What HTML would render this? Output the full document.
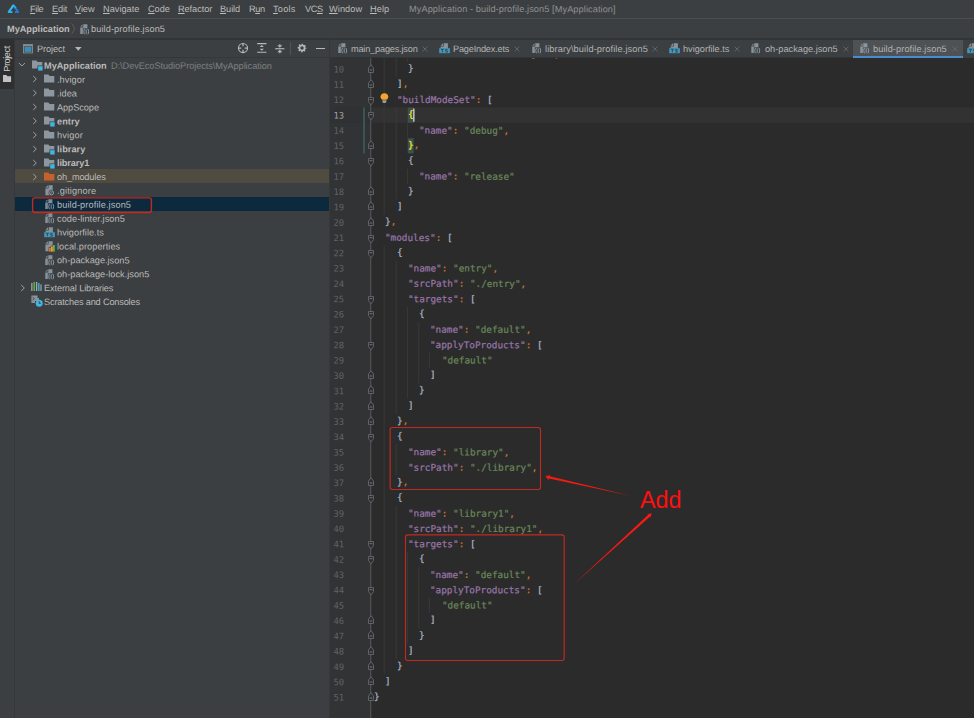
<!DOCTYPE html>
<html lang="en">
<head>
<meta charset="utf-8">
<title>MyApplication - build-profile.json5</title>
<style>
html,body{margin:0;padding:0}
body{width:974px;height:718px;overflow:hidden;background:#3c3f41;position:relative;font-family:'Liberation Sans', sans-serif}
.t,.cl,.ln{transform-origin:0 0}
.t{position:absolute;white-space:pre;line-height:12px;font-family:'Liberation Sans', sans-serif}
.t u{text-decoration-thickness:.8px;text-underline-offset:1.2px}
.i{position:absolute;overflow:visible}
#menubar{position:absolute;left:0;top:0;width:974px;height:18px;background:#3c3f41}
#menuline{position:absolute;left:0;top:18px;width:974px;height:1px;background:#4b4e50}
#navline{position:absolute;left:0;top:38px;width:974px;height:1.6px;background:#323537}
#strip{position:absolute;left:0;top:39.6px;width:14px;height:679px;background:#3c3f41}
#striptab{position:absolute;left:0;top:39px;width:13.8px;height:50.4px;background:#2d2f30}
#stripline{position:absolute;left:13.6px;top:39.6px;width:1px;height:679px;background:#353839}
#striptext{position:absolute;left:-10.7px;top:53.2px;width:36px;height:12px;line-height:12px;font-size:9.2px;letter-spacing:-.42px;color:#d0d0d0;transform:rotate(-90deg);text-align:center;white-space:pre}
#phead{position:absolute;left:14.6px;top:56.8px;width:314.4px;height:1px;background:#353839}
.row{position:absolute;left:14.6px;width:314.4px;height:13.895px}
#edborder{position:absolute;left:329px;top:39px;width:1px;height:679px;background:#36383a}
#gutter{position:absolute;left:330px;top:58px;width:41px;height:660px;background:#313335}
#editor{position:absolute;left:371px;top:58px;width:603px;height:660px;background:#2b2b2b}
.g{position:absolute;width:1px;background:#393939}
.cl{position:absolute;white-space:pre;-webkit-text-stroke:.22px;font-family:'DejaVu Sans Mono', 'Liberation Mono', monospace;font-size:9.35px;line-height:15.32px;height:15.32px;color:#a9b7c6}
.ln{position:absolute;left:331px;width:12.9px;text-align:right;font-family:'DejaVu Sans Mono', 'Liberation Mono', monospace;font-size:8.9px;letter-spacing:-.15px;line-height:15.32px;height:15.32px}
.k{color:#9876aa}.s{color:#6a8759}.p{color:#a9b7c6}.o{color:#cc7832}
.h{color:#ffef28}
#tabbar{position:absolute;left:330px;top:39.6px;width:643px;height:18.4px;background:#3c3f41}
#tabactive{position:absolute;left:853px;top:39.6px;width:110px;height:18px;background:#4e5254}
#tabul{position:absolute;left:853px;top:55.8px;width:110px;height:2.4px;background:#4a8cd0}
#tabline{position:absolute;left:330px;top:57.4px;width:523px;height:1px;background:#323537}
#annot{position:absolute;left:0;top:0}
#codewrap{position:absolute;left:0;top:0;width:974px;height:718px;clip-path:inset(58px 0 0 331px)}
#txt{position:absolute;left:0;top:0;width:974px;height:718px;}
</style>
</head>
<body>
<div id="menubar"></div><div id="menuline"></div><div id="navline"></div>
<svg class="i" style="left:6.8px;top:3.2px" width="13" height="11" viewBox="0 0 13 11"><path d="M8 9H11.2L7 2.9Q6.5 2.2 6 2.9" fill="none" stroke="#2277d8" stroke-width="2" stroke-linejoin="round"/><path d="M8.8 5.1L7 2.9Q6.5 2.2 6 2.9L5.2 3.5" fill="none" stroke="#27a6e2" stroke-width="2" stroke-linejoin="round"/><path d="M5.2 9H1.8L6 2.9Q6.3 2.5 6.6 2.5" fill="none" stroke="#2cc6ec" stroke-width="2" stroke-linejoin="round"/><path d="M5.2 9H1.8L3.5 6.3" fill="none" stroke="#29b0e6" stroke-width="2" stroke-linejoin="round"/></svg>
<svg class="i" style="left:70.6px;top:22.8px" width="5" height="12" viewBox="0 0 5 12"><path d="M0.7 0.4L3.9 5.6L0.7 10.8" stroke="#5f6264" stroke-width=".85" fill="none"/></svg>
<svg class="i" style="left:79.5px;top:23.6px" width="10" height="11" viewBox="0 0 10 11"><path d="M0.3 2.6L2.5 0.4V2.6Z" fill="#9aa7b0" opacity=".8"/><path d="M3.3 0.2H7.4V10H0.3V3.4H3.3Z" fill="#9aa7b0" opacity=".8"/><rect x="2.8" y="4.3" width="7.2" height="6.7" fill="#3c3f41"/><path d="M4.6 4.9C3.5 6.3 3.5 8.9 4.6 10.3M7.8 4.9C8.9 6.3 8.9 8.9 7.8 10.3" stroke="#9aa7b0" stroke-width="1" fill="none" opacity=".88"/><path d="M6.2 5.4V9.8" stroke="#9aa7b0" stroke-width="1" opacity=".88"/></svg>
<div id="strip"></div><div id="striptab"></div><div id="stripline"></div>
<div id="striptext">Project</div>
<svg class="i" style="left:2.9px;top:75px" width="9" height="8" viewBox="0 0 9 8"><path d="M0 0H3.4L4.4 1.2H8.1V6.9H0Z" fill="#c0c2c3"/></svg>
<div id="phead"></div>
<svg class="i" style="left:22.9px;top:44px" width="10" height="9.4" viewBox="0 0 10 9.4"><rect x="0.45" y="0.45" width="9.1" height="8.5" fill="none" stroke="#878d93" stroke-width=".9"/><rect x="0.9" y="0.9" width="8.2" height="1.5" fill="#878d93"/><rect x="1.5" y="3" width="7" height="4.9" fill="#3a8db4"/></svg>
<svg class="i" style="left:75px;top:47.3px" width="7" height="4" viewBox="0 0 7 4"><path d="M0 0H6.6L3.3 3.8Z" fill="#b4b6b8"/></svg>
<svg class="i" style="left:237.2px;top:42.3px" width="12" height="12" viewBox="0 0 12 12"><circle cx="6" cy="6" r="4.55" fill="none" stroke="#b6b8ba" stroke-width="1.15"/><path d="M6 1.4V4.3M6 7.7V10.6M1.4 6H4.3M7.7 6H10.6" stroke="#b6b8ba" stroke-width="1.25"/></svg>
<svg class="i" style="left:256.8px;top:43.4px" width="10" height="10" viewBox="0 0 10 10"><path d="M0.2 0.6H9.4M0.2 9.2H9.4" stroke="#b6b8ba" stroke-width="1.15"/><path d="M4.8 2L6.9 4.1H2.7ZM4.8 7.8L6.9 5.7H2.7Z" fill="#b6b8ba"/></svg>
<svg class="i" style="left:274.6px;top:42.6px" width="10" height="12" viewBox="0 0 10 12"><path d="M0.2 5.75H9.4" stroke="#b6b8ba" stroke-width="1.15"/><path d="M4.8 4.7L7.3 2.2H2.3ZM4.8 6.8L7.3 9.3H2.3Z" fill="#b6b8ba"/><path d="M4.8 1.2V2.4M4.8 9.1V10.3" stroke="#b6b8ba" stroke-width="1.1"/></svg>
<div style="position:absolute;left:290.3px;top:42px;width:1px;height:13px;background:#515456"></div>
<svg class="i" style="left:297.3px;top:43.4px" width="10" height="10" viewBox="0 0 10 10"><circle cx="5" cy="5" r="2.55" fill="none" stroke="#b6b8ba" stroke-width="1.6"/><circle cx="5" cy="5" r="3.6" fill="none" stroke="#b6b8ba" stroke-width="1.5" stroke-dasharray="1.6 1.227" stroke-dashoffset=".8"/></svg>
<div style="position:absolute;left:315.8px;top:47.5px;width:9px;height:1.3px;background:#b6b8ba"></div>
<svg class="i" style="left:18.3px;top:62.0px" width="8" height="6" viewBox="0 0 8 6"><path d="M0.9 1L3.9 4L6.9 1" stroke="#a4a6a8" stroke-width=".95" fill="none"/></svg>
<svg class="i" style="left:31.6px;top:60.2px" width="11" height="10" viewBox="0 0 11 10"><path d="M0 0.6H4.4L5.6 2H10.3V8.6H0Z" fill="#9aa7b0" opacity="0.85"/><rect x="5.5" y="5.5" width="5.2" height="5.2" fill="#3c3f41"/><rect x="6.2" y="6.2" width="4.4" height="4.4" fill="#40b6e0"/></svg>
<svg class="i" style="left:31.8px;top:75.3px" width="6" height="8" viewBox="0 0 6 8"><path d="M1.2 1L4.3 4L1.2 7" stroke="#a4a6a8" stroke-width=".95" fill="none"/></svg>
<svg class="i" style="left:43.9px;top:74.1px" width="11" height="10" viewBox="0 0 11 10"><path d="M0 0.6H4.4L5.6 2H10.3V8.6H0Z" fill="#9aa7b0" opacity="0.85"/></svg>
<svg class="i" style="left:31.8px;top:89.2px" width="6" height="8" viewBox="0 0 6 8"><path d="M1.2 1L4.3 4L1.2 7" stroke="#a4a6a8" stroke-width=".95" fill="none"/></svg>
<svg class="i" style="left:43.9px;top:88.0px" width="11" height="10" viewBox="0 0 11 10"><path d="M0 0.6H4.4L5.6 2H10.3V8.6H0Z" fill="#9aa7b0" opacity="0.85"/></svg>
<svg class="i" style="left:31.8px;top:103.1px" width="6" height="8" viewBox="0 0 6 8"><path d="M1.2 1L4.3 4L1.2 7" stroke="#a4a6a8" stroke-width=".95" fill="none"/></svg>
<svg class="i" style="left:43.9px;top:101.9px" width="11" height="10" viewBox="0 0 11 10"><path d="M0 0.6H4.4L5.6 2H10.3V8.6H0Z" fill="#9aa7b0" opacity="0.85"/></svg>
<svg class="i" style="left:31.8px;top:117.0px" width="6" height="8" viewBox="0 0 6 8"><path d="M1.2 1L4.3 4L1.2 7" stroke="#a4a6a8" stroke-width=".95" fill="none"/></svg>
<svg class="i" style="left:43.9px;top:115.8px" width="11" height="10" viewBox="0 0 11 10"><path d="M0 0.6H4.4L5.6 2H10.3V8.6H0Z" fill="#9aa7b0" opacity="0.85"/><rect x="5.5" y="5.5" width="5.2" height="5.2" fill="#3c3f41"/><rect x="6.2" y="6.2" width="4.4" height="4.4" fill="#40b6e0"/></svg>
<svg class="i" style="left:31.8px;top:130.9px" width="6" height="8" viewBox="0 0 6 8"><path d="M1.2 1L4.3 4L1.2 7" stroke="#a4a6a8" stroke-width=".95" fill="none"/></svg>
<svg class="i" style="left:43.9px;top:129.7px" width="11" height="10" viewBox="0 0 11 10"><path d="M0 0.6H4.4L5.6 2H10.3V8.6H0Z" fill="#9aa7b0" opacity="0.85"/></svg>
<svg class="i" style="left:31.8px;top:144.8px" width="6" height="8" viewBox="0 0 6 8"><path d="M1.2 1L4.3 4L1.2 7" stroke="#a4a6a8" stroke-width=".95" fill="none"/></svg>
<svg class="i" style="left:43.9px;top:143.6px" width="11" height="10" viewBox="0 0 11 10"><path d="M0 0.6H4.4L5.6 2H10.3V8.6H0Z" fill="#9aa7b0" opacity="0.85"/><rect x="5.5" y="5.5" width="5.2" height="5.2" fill="#3c3f41"/><rect x="6.2" y="6.2" width="4.4" height="4.4" fill="#40b6e0"/></svg>
<svg class="i" style="left:31.8px;top:158.7px" width="6" height="8" viewBox="0 0 6 8"><path d="M1.2 1L4.3 4L1.2 7" stroke="#a4a6a8" stroke-width=".95" fill="none"/></svg>
<svg class="i" style="left:43.9px;top:157.5px" width="11" height="10" viewBox="0 0 11 10"><path d="M0 0.6H4.4L5.6 2H10.3V8.6H0Z" fill="#9aa7b0" opacity="0.85"/><rect x="5.5" y="5.5" width="5.2" height="5.2" fill="#3c3f41"/><rect x="6.2" y="6.2" width="4.4" height="4.4" fill="#40b6e0"/></svg>
<div class="row" style="top:168.86px;background:#4f4b40"></div>
<svg class="i" style="left:31.8px;top:172.6px" width="6" height="8" viewBox="0 0 6 8"><path d="M1.2 1L4.3 4L1.2 7" stroke="#a4a6a8" stroke-width=".95" fill="none"/></svg>
<svg class="i" style="left:43.9px;top:171.5px" width="11" height="10" viewBox="0 0 11 10"><path d="M0 0.6H4.4L5.6 2H10.3V8.6H0Z" fill="#c4622d" opacity="1"/></svg>
<svg class="i" style="left:45.0px;top:185.2px" width="10" height="11" viewBox="0 0 10 11"><path d="M0.4 2.7L2.8 0.3V2.7Z" fill="#9aa7b0" opacity=".85"/><path d="M3.5 0.3H7.7V10.2H0.4V3.4H3.5Z" fill="#9aa7b0" opacity=".8"/><circle cx="6.6" cy="7.8" r="3" fill="#3c3f41"/><circle cx="6.6" cy="7.8" r="2" fill="none" stroke="#9aa7b0" stroke-width=".85"/><path d="M5.3 9.1L7.9 6.5" stroke="#9aa7b0" stroke-width=".7"/></svg>
<div class="row" style="top:197px;height:14px;background:#0d293e"></div>
<svg class="i" style="left:45.0px;top:199.1px" width="10" height="11" viewBox="0 0 10 11"><path d="M0.3 2.6L2.5 0.4V2.6Z" fill="#9aa7b0" opacity=".8"/><path d="M3.3 0.2H7.4V10H0.3V3.4H3.3Z" fill="#9aa7b0" opacity=".8"/><rect x="2.8" y="4.3" width="7.2" height="6.7" fill="#0d293e"/><path d="M4.6 4.9C3.5 6.3 3.5 8.9 4.6 10.3M7.8 4.9C8.9 6.3 8.9 8.9 7.8 10.3" stroke="#9aa7b0" stroke-width="1" fill="none" opacity=".88"/><path d="M6.2 5.4V9.8" stroke="#9aa7b0" stroke-width="1" opacity=".88"/></svg>
<svg class="i" style="left:45.0px;top:213.0px" width="10" height="11" viewBox="0 0 10 11"><path d="M0.3 2.6L2.5 0.4V2.6Z" fill="#9aa7b0" opacity=".8"/><path d="M3.3 0.2H7.4V10H0.3V3.4H3.3Z" fill="#9aa7b0" opacity=".8"/><rect x="2.8" y="4.3" width="7.2" height="6.7" fill="#3c3f41"/><path d="M4.6 4.9C3.5 6.3 3.5 8.9 4.6 10.3M7.8 4.9C8.9 6.3 8.9 8.9 7.8 10.3" stroke="#9aa7b0" stroke-width="1" fill="none" opacity=".88"/><path d="M6.2 5.4V9.8" stroke="#9aa7b0" stroke-width="1" opacity=".88"/></svg>
<svg class="i" style="left:43.9px;top:226.9px" width="12" height="11" viewBox="0 0 12 11"><path d="M1.6 2.7L4 0.3V2.7Z" fill="#9aa7b0" opacity=".85"/><path d="M4.7 0.3H8.9V5.6H1.6V3.4H4.7Z" fill="#9aa7b0" opacity=".8"/><rect x="0.2" y="5.2" width="10.7" height="5" fill="#4596b9"/><path d="M2 6.4H4.8M3.4 6.4V9.4M8.4 6.5H6.7V7.8H8.3V9.2H6.5" stroke="#28485a" stroke-width=".85" fill="none"/></svg>
<svg class="i" style="left:45.0px;top:240.8px" width="10" height="11" viewBox="0 0 10 11"><path d="M0.4 2.7L2.8 0.3V2.7Z" fill="#9aa7b0" opacity=".85"/><path d="M3.5 0.3H7.7V10.2H0.4V3.4H3.5Z" fill="#9aa7b0" opacity=".8"/><rect x="3.6" y="6.2" width="6.4" height="4.4" fill="#3c3f41"/><rect x="5.6" y="4.8" width="4.4" height="2" fill="#3c3f41"/><rect x="7.6" y="3.4" width="2.4" height="2" fill="#3c3f41"/><rect x="4" y="6.8" width="1.8" height="3.8" fill="#e8702d"/><rect x="6" y="5.4" width="1.8" height="5.2" fill="#f0a030"/><rect x="8" y="4" width="1.8" height="6.6" fill="#62b543"/></svg>
<svg class="i" style="left:45.0px;top:254.7px" width="10" height="11" viewBox="0 0 10 11"><path d="M0.3 2.6L2.5 0.4V2.6Z" fill="#9aa7b0" opacity=".8"/><path d="M3.3 0.2H7.4V10H0.3V3.4H3.3Z" fill="#9aa7b0" opacity=".8"/><rect x="2.8" y="4.3" width="7.2" height="6.7" fill="#3c3f41"/><path d="M4.6 4.9C3.5 6.3 3.5 8.9 4.6 10.3M7.8 4.9C8.9 6.3 8.9 8.9 7.8 10.3" stroke="#9aa7b0" stroke-width="1" fill="none" opacity=".88"/><path d="M6.2 5.4V9.8" stroke="#9aa7b0" stroke-width="1" opacity=".88"/></svg>
<svg class="i" style="left:45.0px;top:268.6px" width="10" height="11" viewBox="0 0 10 11"><path d="M0.3 2.6L2.5 0.4V2.6Z" fill="#9aa7b0" opacity=".8"/><path d="M3.3 0.2H7.4V10H0.3V3.4H3.3Z" fill="#9aa7b0" opacity=".8"/><rect x="2.8" y="4.3" width="7.2" height="6.7" fill="#3c3f41"/><path d="M4.6 4.9C3.5 6.3 3.5 8.9 4.6 10.3M7.8 4.9C8.9 6.3 8.9 8.9 7.8 10.3" stroke="#9aa7b0" stroke-width="1" fill="none" opacity=".88"/><path d="M6.2 5.4V9.8" stroke="#9aa7b0" stroke-width="1" opacity=".88"/></svg>
<svg class="i" style="left:19.6px;top:283.8px" width="6" height="8" viewBox="0 0 6 8"><path d="M1.2 1L4.3 4L1.2 7" stroke="#a4a6a8" stroke-width=".95" fill="none"/></svg>
<svg class="i" style="left:31.3px;top:282.4px" width="11" height="9" viewBox="0 0 11 9"><rect x="0.2" y="1" width="1.3" height="8" fill="#9aa7b0"/><rect x="2.5" y="0" width="1.4" height="9" fill="#62b543"/><rect x="4.9" y="0" width="1.4" height="9" fill="#9aa7b0"/><rect x="7.2" y="1" width="1.3" height="8" fill="#40b6e0"/><rect x="9.4" y="2.4" width="1.2" height="6.6" fill="#9aa7b0"/></svg>
<svg class="i" style="left:31px;top:294.9px" width="12" height="12" viewBox="0 0 12 12"><path d="M0.4 0.6H6.6V3H8V6H4V8H0.4Z" fill="#9aa7b0" opacity=".8"/><path d="M1.6 2.2L3.4 3.6L1.6 5" stroke="#3c3f41" stroke-width=".8" fill="none"/><circle cx="8.2" cy="8.2" r="3.5" fill="#40b6e0"/><path d="M8.2 6.2V8.4H9.8" stroke="#3c3f41" stroke-width=".9" fill="none"/></svg>
<div id="edborder"></div><div id="gutter"></div><div id="editor"></div>
<svg class="i" style="left:0;top:0" width="974" height="718" viewBox="0 0 974 718"><rect x="371.30" y="107.50" width="603.00" height="15.32" fill="#323232"/><rect x="330.00" y="107.50" width="41.00" height="15.32" fill="#2f3133"/><rect x="370.25" y="58.00" width="1.00" height="660.00" fill="#57595b"/><rect x="363.05" y="107.50" width="2.00" height="45.96" fill="#3a5751"/><rect x="383.60" y="58.00" width="1.00" height="156.74" fill="#393939"/><rect x="395.70" y="58.00" width="1.00" height="18.86" fill="#393939"/><rect x="407.10" y="58.00" width="1.00" height="3.54" fill="#393939"/><rect x="395.70" y="107.50" width="1.00" height="91.92" fill="#393939"/><rect x="407.10" y="122.82" width="1.00" height="15.32" fill="#393939"/><rect x="407.10" y="168.78" width="1.00" height="15.32" fill="#393939"/><rect x="383.60" y="245.38" width="1.00" height="428.96" fill="#393939"/><rect x="395.70" y="260.70" width="1.00" height="153.20" fill="#393939"/><rect x="407.10" y="306.66" width="1.00" height="91.92" fill="#393939"/><rect x="418.30" y="321.98" width="1.00" height="61.28" fill="#393939"/><rect x="428.90" y="352.62" width="1.00" height="15.32" fill="#393939"/><rect x="395.70" y="444.54" width="1.00" height="30.64" fill="#393939"/><rect x="395.70" y="505.82" width="1.00" height="153.20" fill="#393939"/><rect x="407.10" y="551.78" width="1.00" height="91.92" fill="#393939"/><rect x="418.30" y="567.10" width="1.00" height="61.28" fill="#393939"/><rect x="428.90" y="597.74" width="1.00" height="15.32" fill="#393939"/><rect x="407.73" y="107.50" width="5.93" height="15.32" fill="#3b514d"/><rect x="407.73" y="138.14" width="5.93" height="15.32" fill="#3b514d"/><rect x="413.26" y="108.50" width="1.20" height="13.32" fill="#e0e0e0"/></svg>
<svg class="i" style="left:367.9px;top:63.50px" width="6" height="9" viewBox="0 0 6 9"><path d="M0.5 8.5H5.5V4L3 0.7L0.5 4Z" fill="#2d2e30" stroke="#65686b" stroke-width=".9"/><path d="M1.6 6.0H4.4" stroke="#7a7d80" stroke-width=".9"/></svg>
<svg class="i" style="left:367.9px;top:78.82px" width="6" height="9" viewBox="0 0 6 9"><path d="M0.5 8.5H5.5V4L3 0.7L0.5 4Z" fill="#2d2e30" stroke="#65686b" stroke-width=".9"/><path d="M1.6 6.0H4.4" stroke="#7a7d80" stroke-width=".9"/></svg>
<svg class="i" style="left:367.9px;top:96.84px" width="6" height="9" viewBox="0 0 6 9"><path d="M0.5 0.5H5.5V4.6L3 7.9L0.5 4.6Z" fill="#2d2e30" stroke="#65686b" stroke-width=".9"/><path d="M1.6 2.7H4.4" stroke="#7a7d80" stroke-width=".9"/></svg>
<svg class="i" style="left:367.9px;top:112.16px" width="6" height="9" viewBox="0 0 6 9"><path d="M0.5 0.5H5.5V4.6L3 7.9L0.5 4.6Z" fill="#2d2e30" stroke="#65686b" stroke-width=".9"/><path d="M1.6 2.7H4.4" stroke="#7a7d80" stroke-width=".9"/></svg>
<svg class="i" style="left:367.9px;top:140.10px" width="6" height="9" viewBox="0 0 6 9"><path d="M0.5 8.5H5.5V4L3 0.7L0.5 4Z" fill="#2d2e30" stroke="#65686b" stroke-width=".9"/><path d="M1.6 6.0H4.4" stroke="#7a7d80" stroke-width=".9"/></svg>
<svg class="i" style="left:367.9px;top:158.12px" width="6" height="9" viewBox="0 0 6 9"><path d="M0.5 0.5H5.5V4.6L3 7.9L0.5 4.6Z" fill="#2d2e30" stroke="#65686b" stroke-width=".9"/><path d="M1.6 2.7H4.4" stroke="#7a7d80" stroke-width=".9"/></svg>
<svg class="i" style="left:367.9px;top:186.06px" width="6" height="9" viewBox="0 0 6 9"><path d="M0.5 8.5H5.5V4L3 0.7L0.5 4Z" fill="#2d2e30" stroke="#65686b" stroke-width=".9"/><path d="M1.6 6.0H4.4" stroke="#7a7d80" stroke-width=".9"/></svg>
<svg class="i" style="left:367.9px;top:201.38px" width="6" height="9" viewBox="0 0 6 9"><path d="M0.5 8.5H5.5V4L3 0.7L0.5 4Z" fill="#2d2e30" stroke="#65686b" stroke-width=".9"/><path d="M1.6 6.0H4.4" stroke="#7a7d80" stroke-width=".9"/></svg>
<svg class="i" style="left:367.9px;top:216.70px" width="6" height="9" viewBox="0 0 6 9"><path d="M0.5 8.5H5.5V4L3 0.7L0.5 4Z" fill="#2d2e30" stroke="#65686b" stroke-width=".9"/><path d="M1.6 6.0H4.4" stroke="#7a7d80" stroke-width=".9"/></svg>
<svg class="i" style="left:367.9px;top:234.72px" width="6" height="9" viewBox="0 0 6 9"><path d="M0.5 0.5H5.5V4.6L3 7.9L0.5 4.6Z" fill="#2d2e30" stroke="#65686b" stroke-width=".9"/><path d="M1.6 2.7H4.4" stroke="#7a7d80" stroke-width=".9"/></svg>
<svg class="i" style="left:367.9px;top:250.04px" width="6" height="9" viewBox="0 0 6 9"><path d="M0.5 0.5H5.5V4.6L3 7.9L0.5 4.6Z" fill="#2d2e30" stroke="#65686b" stroke-width=".9"/><path d="M1.6 2.7H4.4" stroke="#7a7d80" stroke-width=".9"/></svg>
<svg class="i" style="left:367.9px;top:296.00px" width="6" height="9" viewBox="0 0 6 9"><path d="M0.5 0.5H5.5V4.6L3 7.9L0.5 4.6Z" fill="#2d2e30" stroke="#65686b" stroke-width=".9"/><path d="M1.6 2.7H4.4" stroke="#7a7d80" stroke-width=".9"/></svg>
<svg class="i" style="left:367.9px;top:311.32px" width="6" height="9" viewBox="0 0 6 9"><path d="M0.5 0.5H5.5V4.6L3 7.9L0.5 4.6Z" fill="#2d2e30" stroke="#65686b" stroke-width=".9"/><path d="M1.6 2.7H4.4" stroke="#7a7d80" stroke-width=".9"/></svg>
<svg class="i" style="left:367.9px;top:341.96px" width="6" height="9" viewBox="0 0 6 9"><path d="M0.5 0.5H5.5V4.6L3 7.9L0.5 4.6Z" fill="#2d2e30" stroke="#65686b" stroke-width=".9"/><path d="M1.6 2.7H4.4" stroke="#7a7d80" stroke-width=".9"/></svg>
<svg class="i" style="left:367.9px;top:369.90px" width="6" height="9" viewBox="0 0 6 9"><path d="M0.5 8.5H5.5V4L3 0.7L0.5 4Z" fill="#2d2e30" stroke="#65686b" stroke-width=".9"/><path d="M1.6 6.0H4.4" stroke="#7a7d80" stroke-width=".9"/></svg>
<svg class="i" style="left:367.9px;top:385.22px" width="6" height="9" viewBox="0 0 6 9"><path d="M0.5 8.5H5.5V4L3 0.7L0.5 4Z" fill="#2d2e30" stroke="#65686b" stroke-width=".9"/><path d="M1.6 6.0H4.4" stroke="#7a7d80" stroke-width=".9"/></svg>
<svg class="i" style="left:367.9px;top:400.54px" width="6" height="9" viewBox="0 0 6 9"><path d="M0.5 8.5H5.5V4L3 0.7L0.5 4Z" fill="#2d2e30" stroke="#65686b" stroke-width=".9"/><path d="M1.6 6.0H4.4" stroke="#7a7d80" stroke-width=".9"/></svg>
<svg class="i" style="left:367.9px;top:415.86px" width="6" height="9" viewBox="0 0 6 9"><path d="M0.5 8.5H5.5V4L3 0.7L0.5 4Z" fill="#2d2e30" stroke="#65686b" stroke-width=".9"/><path d="M1.6 6.0H4.4" stroke="#7a7d80" stroke-width=".9"/></svg>
<svg class="i" style="left:367.9px;top:433.88px" width="6" height="9" viewBox="0 0 6 9"><path d="M0.5 0.5H5.5V4.6L3 7.9L0.5 4.6Z" fill="#2d2e30" stroke="#65686b" stroke-width=".9"/><path d="M1.6 2.7H4.4" stroke="#7a7d80" stroke-width=".9"/></svg>
<svg class="i" style="left:367.9px;top:477.14px" width="6" height="9" viewBox="0 0 6 9"><path d="M0.5 8.5H5.5V4L3 0.7L0.5 4Z" fill="#2d2e30" stroke="#65686b" stroke-width=".9"/><path d="M1.6 6.0H4.4" stroke="#7a7d80" stroke-width=".9"/></svg>
<svg class="i" style="left:367.9px;top:495.16px" width="6" height="9" viewBox="0 0 6 9"><path d="M0.5 0.5H5.5V4.6L3 7.9L0.5 4.6Z" fill="#2d2e30" stroke="#65686b" stroke-width=".9"/><path d="M1.6 2.7H4.4" stroke="#7a7d80" stroke-width=".9"/></svg>
<svg class="i" style="left:367.9px;top:541.12px" width="6" height="9" viewBox="0 0 6 9"><path d="M0.5 0.5H5.5V4.6L3 7.9L0.5 4.6Z" fill="#2d2e30" stroke="#65686b" stroke-width=".9"/><path d="M1.6 2.7H4.4" stroke="#7a7d80" stroke-width=".9"/></svg>
<svg class="i" style="left:367.9px;top:556.44px" width="6" height="9" viewBox="0 0 6 9"><path d="M0.5 0.5H5.5V4.6L3 7.9L0.5 4.6Z" fill="#2d2e30" stroke="#65686b" stroke-width=".9"/><path d="M1.6 2.7H4.4" stroke="#7a7d80" stroke-width=".9"/></svg>
<svg class="i" style="left:367.9px;top:587.08px" width="6" height="9" viewBox="0 0 6 9"><path d="M0.5 0.5H5.5V4.6L3 7.9L0.5 4.6Z" fill="#2d2e30" stroke="#65686b" stroke-width=".9"/><path d="M1.6 2.7H4.4" stroke="#7a7d80" stroke-width=".9"/></svg>
<svg class="i" style="left:367.9px;top:615.02px" width="6" height="9" viewBox="0 0 6 9"><path d="M0.5 8.5H5.5V4L3 0.7L0.5 4Z" fill="#2d2e30" stroke="#65686b" stroke-width=".9"/><path d="M1.6 6.0H4.4" stroke="#7a7d80" stroke-width=".9"/></svg>
<svg class="i" style="left:367.9px;top:630.34px" width="6" height="9" viewBox="0 0 6 9"><path d="M0.5 8.5H5.5V4L3 0.7L0.5 4Z" fill="#2d2e30" stroke="#65686b" stroke-width=".9"/><path d="M1.6 6.0H4.4" stroke="#7a7d80" stroke-width=".9"/></svg>
<svg class="i" style="left:367.9px;top:645.66px" width="6" height="9" viewBox="0 0 6 9"><path d="M0.5 8.5H5.5V4L3 0.7L0.5 4Z" fill="#2d2e30" stroke="#65686b" stroke-width=".9"/><path d="M1.6 6.0H4.4" stroke="#7a7d80" stroke-width=".9"/></svg>
<svg class="i" style="left:367.9px;top:660.98px" width="6" height="9" viewBox="0 0 6 9"><path d="M0.5 8.5H5.5V4L3 0.7L0.5 4Z" fill="#2d2e30" stroke="#65686b" stroke-width=".9"/><path d="M1.6 6.0H4.4" stroke="#7a7d80" stroke-width=".9"/></svg>
<svg class="i" style="left:367.9px;top:676.30px" width="6" height="9" viewBox="0 0 6 9"><path d="M0.5 8.5H5.5V4L3 0.7L0.5 4Z" fill="#2d2e30" stroke="#65686b" stroke-width=".9"/><path d="M1.6 6.0H4.4" stroke="#7a7d80" stroke-width=".9"/></svg>
<svg class="i" style="left:367.9px;top:691.62px" width="6" height="9" viewBox="0 0 6 9"><path d="M0.5 8.5H5.5V4L3 0.7L0.5 4Z" fill="#2d2e30" stroke="#65686b" stroke-width=".9"/><path d="M1.6 6.0H4.4" stroke="#7a7d80" stroke-width=".9"/></svg>
<svg class="i" style="left:380.3px;top:92.8px" width="8.8" height="10.4" viewBox="0.6 0 8.8 11" preserveAspectRatio="none"><path d="M5 0.2C2.6 0.2 1.1 1.9 1.1 3.9C1.1 5.4 2 6.3 2.9 7.2H7.1C8 6.3 8.9 5.4 8.9 3.9C8.9 1.9 7.4 0.2 5 0.2Z" fill="#f2a52e"/><path d="M3 7.8H7V9.6L6 10.6H4L3 9.6Z" fill="#9b9ea1"/></svg>
<div id="tabbar"></div><div id="tabactive"></div><div id="tabul"></div><div id="tabline"></div>
<svg class="i" style="left:337.9px;top:43.2px" width="10" height="11" viewBox="0 0 10 11"><path d="M0.3 2.6L2.5 0.4V2.6Z" fill="#9aa7b0" opacity=".8"/><path d="M3.3 0.2H7.4V10H0.3V3.4H3.3Z" fill="#9aa7b0" opacity=".8"/><rect x="2.8" y="4.3" width="7.2" height="6.7" fill="#3c3f41"/><path d="M4.6 4.9C3.5 6.3 3.5 8.9 4.6 10.3M7.8 4.9C8.9 6.3 8.9 8.9 7.8 10.3" stroke="#9aa7b0" stroke-width="1" fill="none" opacity=".88"/><path d="M6.2 5.4V9.8" stroke="#9aa7b0" stroke-width="1" opacity=".88"/></svg>
<svg class="i" style="left:422.3px;top:46.2px" width="6" height="6" viewBox="0 0 6 6"><path d="M0.6 0.6L5.4 5.4M5.4 0.6L0.6 5.4" stroke="#686b6d" stroke-width=".8"/></svg>
<svg class="i" style="left:439.0px;top:43.2px" width="12" height="11" viewBox="0 0 12 11"><path d="M1.6 2.7L4 0.3V2.7Z" fill="#9aa7b0" opacity=".85"/><path d="M4.7 0.3H8.9V5.6H1.6V3.4H4.7Z" fill="#9aa7b0" opacity=".8"/><rect x="0.2" y="5.2" width="10.7" height="5" fill="#4596b9"/><path d="M2 6.4H4.8M3.4 6.4V9.4M8.4 6.5H6.7V7.8H8.3V9.2H6.5" stroke="#28485a" stroke-width=".85" fill="none"/></svg>
<svg class="i" style="left:513.8px;top:46.2px" width="6" height="6" viewBox="0 0 6 6"><path d="M0.6 0.6L5.4 5.4M5.4 0.6L0.6 5.4" stroke="#686b6d" stroke-width=".8"/></svg>
<svg class="i" style="left:531.7px;top:43.2px" width="10" height="11" viewBox="0 0 10 11"><path d="M0.3 2.6L2.5 0.4V2.6Z" fill="#9aa7b0" opacity=".8"/><path d="M3.3 0.2H7.4V10H0.3V3.4H3.3Z" fill="#9aa7b0" opacity=".8"/><rect x="2.8" y="4.3" width="7.2" height="6.7" fill="#3c3f41"/><path d="M4.6 4.9C3.5 6.3 3.5 8.9 4.6 10.3M7.8 4.9C8.9 6.3 8.9 8.9 7.8 10.3" stroke="#9aa7b0" stroke-width="1" fill="none" opacity=".88"/><path d="M6.2 5.4V9.8" stroke="#9aa7b0" stroke-width="1" opacity=".88"/></svg>
<svg class="i" style="left:652.2px;top:46.2px" width="6" height="6" viewBox="0 0 6 6"><path d="M0.6 0.6L5.4 5.4M5.4 0.6L0.6 5.4" stroke="#686b6d" stroke-width=".8"/></svg>
<svg class="i" style="left:669.0px;top:43.2px" width="12" height="11" viewBox="0 0 12 11"><path d="M1.6 2.7L4 0.3V2.7Z" fill="#9aa7b0" opacity=".85"/><path d="M4.7 0.3H8.9V5.6H1.6V3.4H4.7Z" fill="#9aa7b0" opacity=".8"/><rect x="0.2" y="5.2" width="10.7" height="5" fill="#4596b9"/><path d="M2 6.4H4.8M3.4 6.4V9.4M8.4 6.5H6.7V7.8H8.3V9.2H6.5" stroke="#28485a" stroke-width=".85" fill="none"/></svg>
<svg class="i" style="left:734.2px;top:46.2px" width="6" height="6" viewBox="0 0 6 6"><path d="M0.6 0.6L5.4 5.4M5.4 0.6L0.6 5.4" stroke="#686b6d" stroke-width=".8"/></svg>
<svg class="i" style="left:751.0px;top:43.2px" width="10" height="11" viewBox="0 0 10 11"><path d="M0.3 2.6L2.5 0.4V2.6Z" fill="#9aa7b0" opacity=".8"/><path d="M3.3 0.2H7.4V10H0.3V3.4H3.3Z" fill="#9aa7b0" opacity=".8"/><rect x="2.8" y="4.3" width="7.2" height="6.7" fill="#3c3f41"/><path d="M4.6 4.9C3.5 6.3 3.5 8.9 4.6 10.3M7.8 4.9C8.9 6.3 8.9 8.9 7.8 10.3" stroke="#9aa7b0" stroke-width="1" fill="none" opacity=".88"/><path d="M6.2 5.4V9.8" stroke="#9aa7b0" stroke-width="1" opacity=".88"/></svg>
<svg class="i" style="left:842.5px;top:46.2px" width="6" height="6" viewBox="0 0 6 6"><path d="M0.6 0.6L5.4 5.4M5.4 0.6L0.6 5.4" stroke="#686b6d" stroke-width=".8"/></svg>
<svg class="i" style="left:860.2px;top:43.2px" width="10" height="11" viewBox="0 0 10 11"><path d="M0.3 2.6L2.5 0.4V2.6Z" fill="#9aa7b0" opacity=".8"/><path d="M3.3 0.2H7.4V10H0.3V3.4H3.3Z" fill="#9aa7b0" opacity=".8"/><rect x="2.8" y="4.3" width="7.2" height="6.7" fill="#4e5254"/><path d="M4.6 4.9C3.5 6.3 3.5 8.9 4.6 10.3M7.8 4.9C8.9 6.3 8.9 8.9 7.8 10.3" stroke="#9aa7b0" stroke-width="1" fill="none" opacity=".88"/><path d="M6.2 5.4V9.8" stroke="#9aa7b0" stroke-width="1" opacity=".88"/></svg>
<svg class="i" style="left:951.6px;top:46.2px" width="6" height="6" viewBox="0 0 6 6"><path d="M0.6 0.6L5.4 5.4M5.4 0.6L0.6 5.4" stroke="#686b6d" stroke-width=".8"/></svg>
<svg class="i" style="left:967.4px;top:43.2px" width="12" height="11" viewBox="0 0 12 11"><path d="M1.6 2.7L4 0.3V2.7Z" fill="#9aa7b0" opacity=".85"/><path d="M4.7 0.3H8.9V5.6H1.6V3.4H4.7Z" fill="#9aa7b0" opacity=".8"/><rect x="0.2" y="5.2" width="10.7" height="5" fill="#4596b9"/><path d="M2 6.4H4.8M3.4 6.4V9.4M8.4 6.5H6.7V7.8H8.3V9.2H6.5" stroke="#28485a" stroke-width=".85" fill="none"/></svg>
<svg id="annot" width="974" height="718" viewBox="0 0 974 718"><rect x="32.6" y="197.9" width="118.8" height="14.6" rx="2.2" fill="none" stroke="#c22a21" stroke-width="1.4"/><rect x="390.15" y="427.5" width="150.35" height="61.95" rx="2.2" fill="none" stroke="#c22a21" stroke-width="1.15"/><rect x="405.5" y="534.85" width="158.68" height="125.65" rx="2.2" fill="none" stroke="#c22a21" stroke-width="1.15"/><path d="M545.3 476.5L549.97 474.9L549.66 476.26L631.5 496L549.14 478.6L548.83 479.97Z" fill="#f51a12"/><path d="M651.8 513.2L650.47 517.39L649.83 516.68L573.9 584.2L648.15 514.84L647.51 514.13Z" fill="#f51a12"/><text x="639.9" y="508.2" font-family="Liberation Sans, sans-serif" font-size="23.1" textLength="41.5" lengthAdjust="spacingAndGlyphs" fill="#ff1010">Add</text></svg>
<div id="txt">
<span class="t" style="left:30.20px;top:3px;transform:translateY(0.00px) rotate(.05deg);font-size:9.20px;color:#bbbbbb;letter-spacing:-0.381px;"><u>F</u>ile</span>
<span class="t" style="left:51.60px;top:3px;transform:translateY(0.00px) rotate(.05deg);font-size:9.20px;color:#bbbbbb;letter-spacing:-0.139px;"><u>E</u>dit</span>
<span class="t" style="left:75.30px;top:3px;transform:translateY(0.00px) rotate(.05deg);font-size:9.20px;color:#bbbbbb;letter-spacing:-0.069px;"><u>V</u>iew</span>
<span class="t" style="left:102.90px;top:3px;transform:translateY(0.00px) rotate(.05deg);font-size:9.20px;color:#bbbbbb;letter-spacing:0.024px;"><u>N</u>avigate</span>
<span class="t" style="left:148.00px;top:3px;transform:translateY(0.00px) rotate(.05deg);font-size:9.20px;color:#bbbbbb;letter-spacing:-0.023px;"><u>C</u>ode</span>
<span class="t" style="left:178.10px;top:3px;transform:translateY(0.00px) rotate(.05deg);font-size:9.20px;color:#bbbbbb;letter-spacing:-0.071px;"><u>R</u>efactor</span>
<span class="t" style="left:220.40px;top:3px;transform:translateY(0.00px) rotate(.05deg);font-size:9.20px;color:#bbbbbb;letter-spacing:-0.052px;"><u>B</u>uild</span>
<span class="t" style="left:249.20px;top:3px;transform:translateY(0.00px) rotate(.05deg);font-size:9.20px;color:#bbbbbb;letter-spacing:-0.400px;">R<u>u</u>n</span>
<span class="t" style="left:273.30px;top:3px;transform:translateY(0.00px) rotate(.05deg);font-size:9.20px;color:#bbbbbb;letter-spacing:0.244px;"><u>T</u>ools</span>
<span class="t" style="left:304.60px;top:3px;transform:translateY(0.00px) rotate(.05deg);font-size:9.20px;color:#bbbbbb;letter-spacing:-0.400px;">VC<u>S</u></span>
<span class="t" style="left:329.30px;top:3px;transform:translateY(0.00px) rotate(.05deg);font-size:9.20px;color:#bbbbbb;letter-spacing:0.080px;"><u>W</u>indow</span>
<span class="t" style="left:369.90px;top:3px;transform:translateY(0.00px) rotate(.05deg);font-size:9.20px;color:#bbbbbb;letter-spacing:0.095px;"><u>H</u>elp</span>
<span class="t" style="left:409.40px;top:3px;transform:translateY(0.00px) rotate(.05deg);font-size:9.20px;color:#8f9192;letter-spacing:0.088px;">MyApplication - build-profile.json5 [MyApplication]</span>
<span class="t" style="left:7.10px;top:23px;transform:translateY(0.00px) rotate(.05deg);font-size:9.20px;color:#bbbbbb;font-weight:700;letter-spacing:-0.005px;">MyApplication</span>
<span class="t" style="left:91.20px;top:23px;transform:translateY(0.00px) rotate(.05deg);font-size:9.20px;color:#bbbbbb;letter-spacing:0.110px;">build-profile.json5</span>
<span class="t" style="left:36.70px;top:43px;transform:translateY(0.00px) rotate(.05deg);font-size:9.20px;color:#bbbbbb;letter-spacing:-0.091px;">Project</span>
<span class="t" style="left:44.20px;top:59px;transform:translateY(0.80px) rotate(.05deg);font-size:9.20px;color:#bbbbbb;font-weight:700;letter-spacing:-0.005px;">MyApplication</span>
<span class="t" style="left:111.40px;top:59px;transform:translateY(0.80px) rotate(.05deg);font-size:9.20px;color:#7d8082;letter-spacing:-0.057px;">D:\DevEcoStudioProjects\MyApplication</span>
<span class="t" style="left:56.70px;top:73px;transform:translateY(0.69px) rotate(.05deg);font-size:9.20px;color:#bbbbbb;letter-spacing:0.069px;">.hvigor</span>
<span class="t" style="left:56.70px;top:87px;transform:translateY(0.59px) rotate(.05deg);font-size:9.20px;color:#bbbbbb;letter-spacing:-0.010px;">.idea</span>
<span class="t" style="left:56.70px;top:101px;transform:translateY(0.48px) rotate(.05deg);font-size:9.20px;color:#bbbbbb;letter-spacing:-0.057px;">AppScope</span>
<span class="t" style="left:56.70px;top:115px;transform:translateY(0.38px) rotate(.05deg);font-size:9.20px;color:#bbbbbb;font-weight:700;letter-spacing:0.041px;">entry</span>
<span class="t" style="left:56.70px;top:129px;transform:translateY(0.28px) rotate(.05deg);font-size:9.20px;color:#bbbbbb;letter-spacing:0.174px;">hvigor</span>
<span class="t" style="left:56.70px;top:143px;transform:translateY(0.17px) rotate(.05deg);font-size:9.20px;color:#bbbbbb;font-weight:700;letter-spacing:0.039px;">library</span>
<span class="t" style="left:56.70px;top:157px;transform:translateY(0.06px) rotate(.05deg);font-size:9.20px;color:#bbbbbb;font-weight:700;letter-spacing:-0.118px;">library1</span>
<span class="t" style="left:56.70px;top:170px;transform:translateY(0.96px) rotate(.05deg);font-size:9.20px;color:#bbbbbb;letter-spacing:-0.142px;">oh_modules</span>
<span class="t" style="left:56.70px;top:184px;transform:translateY(0.85px) rotate(.05deg);font-size:9.20px;color:#bbbbbb;letter-spacing:0.145px;">.gitignore</span>
<span class="t" style="left:56.70px;top:198px;transform:translateY(0.75px) rotate(.05deg);font-size:9.20px;color:#bbbbbb;letter-spacing:0.110px;">build-profile.json5</span>
<span class="t" style="left:56.70px;top:212px;transform:translateY(0.65px) rotate(.05deg);font-size:9.20px;color:#bbbbbb;letter-spacing:0.053px;">code-linter.json5</span>
<span class="t" style="left:56.70px;top:226px;transform:translateY(0.54px) rotate(.05deg);font-size:9.20px;color:#bbbbbb;letter-spacing:0.036px;">hvigorfile.ts</span>
<span class="t" style="left:56.70px;top:240px;transform:translateY(0.43px) rotate(.05deg);font-size:9.20px;color:#bbbbbb;letter-spacing:0.057px;">local.properties</span>
<span class="t" style="left:56.70px;top:254px;transform:translateY(0.33px) rotate(.05deg);font-size:9.20px;color:#bbbbbb;">oh-package.json5</span>
<span class="t" style="left:56.70px;top:268px;transform:translateY(0.23px) rotate(.05deg);font-size:9.20px;color:#bbbbbb;letter-spacing:0.021px;">oh-package-lock.json5</span>
<span class="t" style="left:44.30px;top:282px;transform:translateY(0.12px) rotate(.05deg);font-size:9.20px;color:#bbbbbb;letter-spacing:-0.122px;">External Libraries</span>
<span class="t" style="left:44.30px;top:296px;transform:translateY(0.02px) rotate(.05deg);font-size:9.20px;color:#bbbbbb;letter-spacing:-0.169px;">Scratches and Consoles</span>
<span class="t" style="left:350.70px;top:43px;transform:translateY(0.00px) rotate(.05deg);font-size:9.20px;color:#b2b4b5;letter-spacing:-0.191px;">main_pages.json</span>
<span class="t" style="left:453.00px;top:43px;transform:translateY(0.00px) rotate(.05deg);font-size:9.20px;color:#b2b4b5;letter-spacing:-0.194px;">PageIndex.ets</span>
<span class="t" style="left:544.90px;top:43px;transform:translateY(0.00px) rotate(.05deg);font-size:9.20px;color:#b2b4b5;letter-spacing:0.129px;">library\build-profile.json5</span>
<span class="t" style="left:683.30px;top:43px;transform:translateY(0.00px) rotate(.05deg);font-size:9.20px;color:#b2b4b5;letter-spacing:-0.010px;">hvigorfile.ts</span>
<span class="t" style="left:765.20px;top:43px;transform:translateY(0.00px) rotate(.05deg);font-size:9.20px;color:#b2b4b5;letter-spacing:0.011px;">oh-package.json5</span>
<span class="t" style="left:873.20px;top:43px;transform:translateY(0.00px) rotate(.05deg);font-size:9.20px;color:#b2b4b5;letter-spacing:0.094px;">build-profile.json5</span>
<div id="codewrap">
<div class="cl" style="top:46px;transform:translateY(0.02px) rotate(.05deg);left:419.09px"><span class="k">&quot;runtimeOS&quot;</span><span class="o">:</span><span class="p"> </span><span class="s">&quot;HarmonyOS&quot;</span><span class="o">,</span></div>
<div class="cl" style="top:60px;transform:translateY(0.34px) rotate(.05deg);left:407.83px"><span class="p">}</span></div>
<div class="ln" style="top:62px;transform:translateY(0.44px) rotate(.05deg);color:#606366">10</div>
<div class="cl" style="top:75px;transform:translateY(0.66px) rotate(.05deg);left:396.57px"><span class="p">]</span><span class="o">,</span></div>
<div class="ln" style="top:77px;transform:translateY(0.76px) rotate(.05deg);color:#606366">11</div>
<div class="cl" style="top:91px;transform:translateY(0.98px) rotate(.05deg);left:396.57px"><span class="k">&quot;buildModeSet&quot;</span><span class="o">:</span><span class="p"> [</span></div>
<div class="ln" style="top:93px;transform:translateY(0.08px) rotate(.05deg);color:#606366">12</div>
<div class="cl" style="top:106px;transform:translateY(0.30px) rotate(.05deg);left:407.83px"><span class="h">{</span></div>
<div class="ln" style="top:108px;transform:translateY(0.40px) rotate(.05deg);color:#a4a3a3">13</div>
<div class="cl" style="top:122px;transform:translateY(0.62px) rotate(.05deg);left:419.09px"><span class="k">&quot;name&quot;</span><span class="o">:</span><span class="p"> </span><span class="s">&quot;debug&quot;</span><span class="o">,</span></div>
<div class="ln" style="top:123px;transform:translateY(0.72px) rotate(.05deg);color:#606366">14</div>
<div class="cl" style="top:136px;transform:translateY(0.94px) rotate(.05deg);left:407.83px"><span class="h">}</span><span class="o">,</span></div>
<div class="ln" style="top:139px;transform:translateY(0.04px) rotate(.05deg);color:#606366">15</div>
<div class="cl" style="top:152px;transform:translateY(0.26px) rotate(.05deg);left:407.83px"><span class="p">{</span></div>
<div class="ln" style="top:154px;transform:translateY(0.36px) rotate(.05deg);color:#606366">16</div>
<div class="cl" style="top:168px;transform:translateY(0.58px) rotate(.05deg);left:419.09px"><span class="k">&quot;name&quot;</span><span class="o">:</span><span class="p"> </span><span class="s">&quot;release&quot;</span></div>
<div class="ln" style="top:169px;transform:translateY(0.68px) rotate(.05deg);color:#606366">17</div>
<div class="cl" style="top:182px;transform:translateY(0.90px) rotate(.05deg);left:407.83px"><span class="p">}</span></div>
<div class="ln" style="top:185px;transform:translateY(0.00px) rotate(.05deg);color:#606366">18</div>
<div class="cl" style="top:198px;transform:translateY(0.22px) rotate(.05deg);left:396.57px"><span class="p">]</span></div>
<div class="ln" style="top:200px;transform:translateY(0.32px) rotate(.05deg);color:#606366">19</div>
<div class="cl" style="top:213px;transform:translateY(0.54px) rotate(.05deg);left:385.31px"><span class="p">}</span><span class="o">,</span></div>
<div class="ln" style="top:215px;transform:translateY(0.64px) rotate(.05deg);color:#606366">20</div>
<div class="cl" style="top:229px;transform:translateY(0.86px) rotate(.05deg);left:385.31px"><span class="k">&quot;modules&quot;</span><span class="o">:</span><span class="p"> [</span></div>
<div class="ln" style="top:230px;transform:translateY(0.96px) rotate(.05deg);color:#606366">21</div>
<div class="cl" style="top:244px;transform:translateY(0.18px) rotate(.05deg);left:396.57px"><span class="p">{</span></div>
<div class="ln" style="top:246px;transform:translateY(0.28px) rotate(.05deg);color:#606366">22</div>
<div class="cl" style="top:260px;transform:translateY(0.50px) rotate(.05deg);left:407.83px"><span class="k">&quot;name&quot;</span><span class="o">:</span><span class="p"> </span><span class="s">&quot;entry&quot;</span><span class="o">,</span></div>
<div class="ln" style="top:261px;transform:translateY(0.60px) rotate(.05deg);color:#606366">23</div>
<div class="cl" style="top:275px;transform:translateY(0.82px) rotate(.05deg);left:407.83px"><span class="k">&quot;srcPath&quot;</span><span class="o">:</span><span class="p"> </span><span class="s">&quot;./entry&quot;</span><span class="o">,</span></div>
<div class="ln" style="top:276px;transform:translateY(0.92px) rotate(.05deg);color:#606366">24</div>
<div class="cl" style="top:291px;transform:translateY(0.14px) rotate(.05deg);left:407.83px"><span class="k">&quot;targets&quot;</span><span class="o">:</span><span class="p"> [</span></div>
<div class="ln" style="top:292px;transform:translateY(0.24px) rotate(.05deg);color:#606366">25</div>
<div class="cl" style="top:305px;transform:translateY(0.46px) rotate(.05deg);left:419.09px"><span class="p">{</span></div>
<div class="ln" style="top:307px;transform:translateY(0.56px) rotate(.05deg);color:#606366">26</div>
<div class="cl" style="top:321px;transform:translateY(0.78px) rotate(.05deg);left:430.35px"><span class="k">&quot;name&quot;</span><span class="o">:</span><span class="p"> </span><span class="s">&quot;default&quot;</span><span class="o">,</span></div>
<div class="ln" style="top:322px;transform:translateY(0.88px) rotate(.05deg);color:#606366">27</div>
<div class="cl" style="top:337px;transform:translateY(0.10px) rotate(.05deg);left:430.35px"><span class="k">&quot;applyToProducts&quot;</span><span class="o">:</span><span class="p"> [</span></div>
<div class="ln" style="top:338px;transform:translateY(0.20px) rotate(.05deg);color:#606366">28</div>
<div class="cl" style="top:352px;transform:translateY(0.42px) rotate(.05deg);left:441.61px"><span class="s">&quot;default&quot;</span></div>
<div class="ln" style="top:353px;transform:translateY(0.52px) rotate(.05deg);color:#606366">29</div>
<div class="cl" style="top:366px;transform:translateY(0.74px) rotate(.05deg);left:430.35px"><span class="p">]</span></div>
<div class="ln" style="top:368px;transform:translateY(0.84px) rotate(.05deg);color:#606366">30</div>
<div class="cl" style="top:382px;transform:translateY(0.06px) rotate(.05deg);left:419.09px"><span class="p">}</span></div>
<div class="ln" style="top:384px;transform:translateY(0.16px) rotate(.05deg);color:#606366">31</div>
<div class="cl" style="top:397px;transform:translateY(0.38px) rotate(.05deg);left:407.83px"><span class="p">]</span></div>
<div class="ln" style="top:399px;transform:translateY(0.48px) rotate(.05deg);color:#606366">32</div>
<div class="cl" style="top:412px;transform:translateY(0.70px) rotate(.05deg);left:396.57px"><span class="p">}</span><span class="o">,</span></div>
<div class="ln" style="top:414px;transform:translateY(0.80px) rotate(.05deg);color:#606366">33</div>
<div class="cl" style="top:428px;transform:translateY(0.02px) rotate(.05deg);left:396.57px"><span class="p">{</span></div>
<div class="ln" style="top:430px;transform:translateY(0.12px) rotate(.05deg);color:#606366">34</div>
<div class="cl" style="top:444px;transform:translateY(0.34px) rotate(.05deg);left:407.83px"><span class="k">&quot;name&quot;</span><span class="o">:</span><span class="p"> </span><span class="s">&quot;library&quot;</span><span class="o">,</span></div>
<div class="ln" style="top:445px;transform:translateY(0.44px) rotate(.05deg);color:#606366">35</div>
<div class="cl" style="top:459px;transform:translateY(0.66px) rotate(.05deg);left:407.83px"><span class="k">&quot;srcPath&quot;</span><span class="o">:</span><span class="p"> </span><span class="s">&quot;./library&quot;</span><span class="o">,</span></div>
<div class="ln" style="top:460px;transform:translateY(0.76px) rotate(.05deg);color:#606366">36</div>
<div class="cl" style="top:473px;transform:translateY(0.98px) rotate(.05deg);left:396.57px"><span class="p">}</span><span class="o">,</span></div>
<div class="ln" style="top:476px;transform:translateY(0.08px) rotate(.05deg);color:#606366">37</div>
<div class="cl" style="top:489px;transform:translateY(0.30px) rotate(.05deg);left:396.57px"><span class="p">{</span></div>
<div class="ln" style="top:491px;transform:translateY(0.40px) rotate(.05deg);color:#606366">38</div>
<div class="cl" style="top:505px;transform:translateY(0.62px) rotate(.05deg);left:407.83px"><span class="k">&quot;name&quot;</span><span class="o">:</span><span class="p"> </span><span class="s">&quot;library1&quot;</span><span class="o">,</span></div>
<div class="ln" style="top:506px;transform:translateY(0.72px) rotate(.05deg);color:#606366">39</div>
<div class="cl" style="top:520px;transform:translateY(0.94px) rotate(.05deg);left:407.83px"><span class="k">&quot;srcPath&quot;</span><span class="o">:</span><span class="p"> </span><span class="s">&quot;./library1&quot;</span><span class="o">,</span></div>
<div class="ln" style="top:522px;transform:translateY(0.04px) rotate(.05deg);color:#606366">40</div>
<div class="cl" style="top:536px;transform:translateY(0.26px) rotate(.05deg);left:407.83px"><span class="k">&quot;targets&quot;</span><span class="o">:</span><span class="p"> [</span></div>
<div class="ln" style="top:537px;transform:translateY(0.36px) rotate(.05deg);color:#606366">41</div>
<div class="cl" style="top:550px;transform:translateY(0.58px) rotate(.05deg);left:419.09px"><span class="p">{</span></div>
<div class="ln" style="top:552px;transform:translateY(0.68px) rotate(.05deg);color:#606366">42</div>
<div class="cl" style="top:566px;transform:translateY(0.90px) rotate(.05deg);left:430.35px"><span class="k">&quot;name&quot;</span><span class="o">:</span><span class="p"> </span><span class="s">&quot;default&quot;</span><span class="o">,</span></div>
<div class="ln" style="top:568px;transform:translateY(0.00px) rotate(.05deg);color:#606366">43</div>
<div class="cl" style="top:582px;transform:translateY(0.22px) rotate(.05deg);left:430.35px"><span class="k">&quot;applyToProducts&quot;</span><span class="o">:</span><span class="p"> [</span></div>
<div class="ln" style="top:583px;transform:translateY(0.32px) rotate(.05deg);color:#606366">44</div>
<div class="cl" style="top:597px;transform:translateY(0.54px) rotate(.05deg);left:441.61px"><span class="s">&quot;default&quot;</span></div>
<div class="ln" style="top:598px;transform:translateY(0.64px) rotate(.05deg);color:#606366">45</div>
<div class="cl" style="top:611px;transform:translateY(0.86px) rotate(.05deg);left:430.35px"><span class="p">]</span></div>
<div class="ln" style="top:613px;transform:translateY(0.96px) rotate(.05deg);color:#606366">46</div>
<div class="cl" style="top:627px;transform:translateY(0.18px) rotate(.05deg);left:419.09px"><span class="p">}</span></div>
<div class="ln" style="top:629px;transform:translateY(0.28px) rotate(.05deg);color:#606366">47</div>
<div class="cl" style="top:642px;transform:translateY(0.50px) rotate(.05deg);left:407.83px"><span class="p">]</span></div>
<div class="ln" style="top:644px;transform:translateY(0.60px) rotate(.05deg);color:#606366">48</div>
<div class="cl" style="top:657px;transform:translateY(0.82px) rotate(.05deg);left:396.57px"><span class="p">}</span></div>
<div class="ln" style="top:659px;transform:translateY(0.92px) rotate(.05deg);color:#606366">49</div>
<div class="cl" style="top:673px;transform:translateY(0.14px) rotate(.05deg);left:385.31px"><span class="p">]</span></div>
<div class="ln" style="top:675px;transform:translateY(0.24px) rotate(.05deg);color:#606366">50</div>
<div class="cl" style="top:688px;transform:translateY(0.46px) rotate(.05deg);left:374.05px"><span class="p">}</span></div>
<div class="ln" style="top:690px;transform:translateY(0.56px) rotate(.05deg);color:#606366">51</div>
</div>
</div>
</body>
</html>
